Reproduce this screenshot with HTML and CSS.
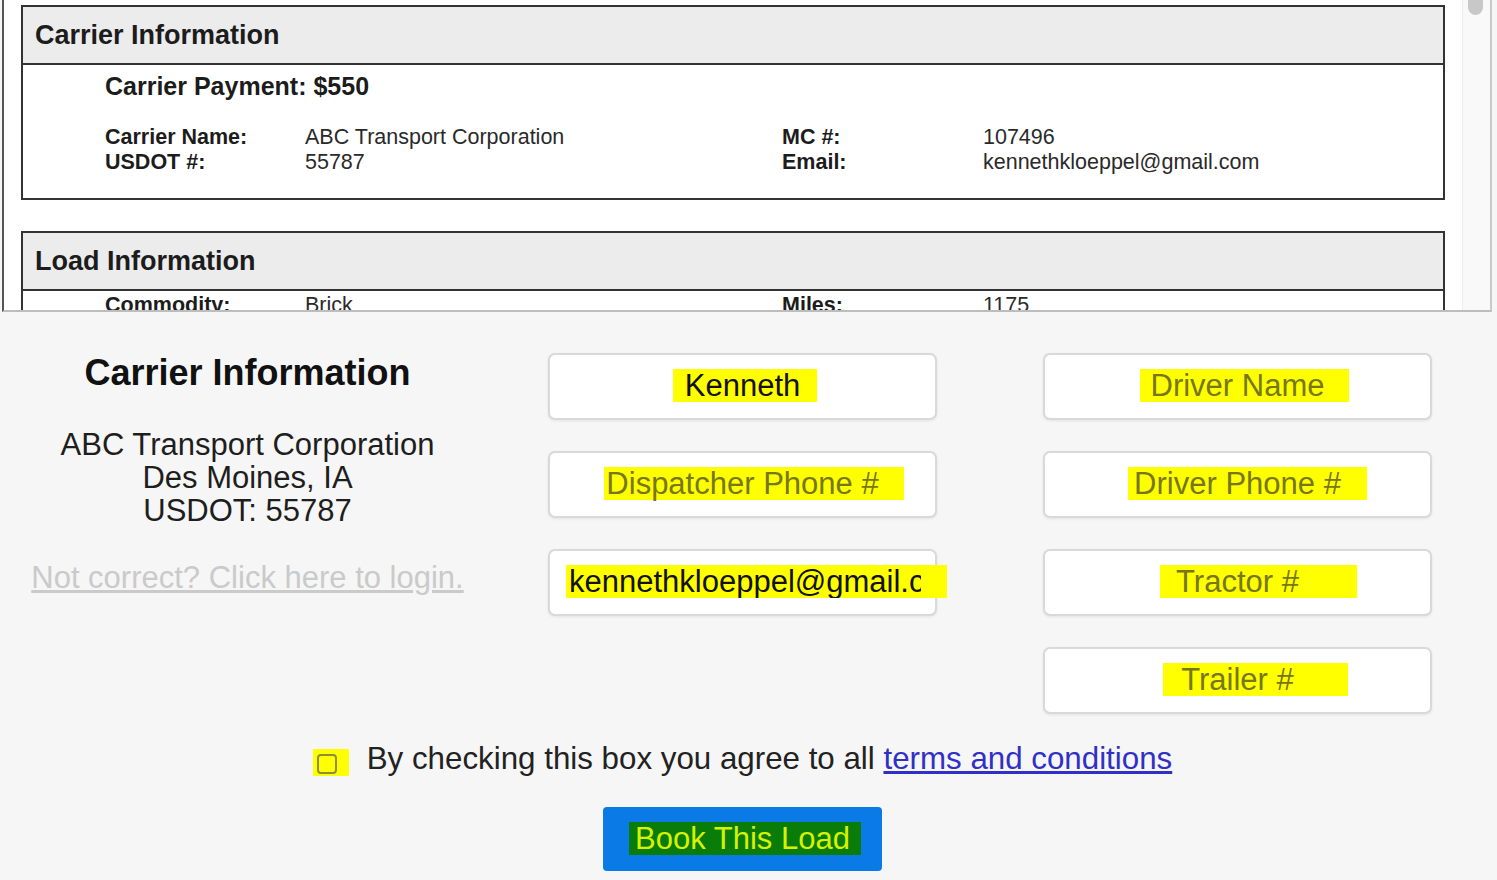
FILE: index.html
```html
<!DOCTYPE html>
<html lang="en">
<head>
    <meta charset="UTF-8">
    <meta name="viewport" content="width=device-width, initial-scale=1.0">
    <title>Book This Load</title>
    <link rel="stylesheet" href="styles.css">
</head>
<body>
    <!-- Vista previa de la carga (ventana con scroll) -->
    <div class="preview">
        <div class="preview-content">
            <div class="info-box">
                <div class="info-header">Carrier Information</div>
                <div class="info-body">
                    <div class="payment">Carrier Payment: $550</div>
                    <div class="info-grid">
                        <span class="label">Carrier Name:</span>
                        <span>ABC Transport Corporation</span>
                        <span class="label">MC #:</span>
                        <span>107496</span>
                        <span class="label">USDOT #:</span>
                        <span>55787</span>
                        <span class="label">Email:</span>
                        <span>kennethkloeppel@gmail.com</span>
                    </div>
                </div>
            </div>

            <div class="info-box">
                <div class="info-header">Load Information</div>
                <div class="info-body load-body">
                    <div class="info-grid">
                        <span class="label">Commodity:</span>
                        <span>Brick</span>
                        <span class="label">Miles:</span>
                        <span>1175</span>
                    </div>
                </div>
            </div>
        </div>
        <div class="scrollbar"><div class="thumb"></div></div>
    </div>

    <form class="booking">
        <div class="booking-grid">
            <div class="carrier-summary">
                <h2>Carrier Information</h2>
                <div class="carrier-address">
                    ABC Transport Corporation<br>
                    Des Moines, IA<br>
                    USDOT: 55787
                </div>
                <a href="#" class="login-link">Not correct? Click here to login.</a>
            </div>

            <div class="field-column">
                <div class="field"><mark class="hl hl-first-name">Kenneth</mark></div>
                <div class="field placeholder"><mark class="hl hl-dispatch">Dispatcher Phone #</mark></div>
                <div class="field"><mark class="hl hl-email"><span class="clip">kennethkloeppel@gmail.com</span></mark></div>
            </div>

            <div class="field-column">
                <div class="field placeholder"><mark class="hl hl-driver">Driver Name</mark></div>
                <div class="field placeholder"><mark class="hl hl-driver-phone">Driver Phone #</mark></div>
                <div class="field placeholder"><mark class="hl hl-tractor">Tractor #</mark></div>
                <div class="field placeholder"><mark class="hl hl-trailer">Trailer #</mark></div>
            </div>
        </div>

        <label class="terms">
            <span class="check-hl"><span class="check-box"></span></span>
            <span>By checking this box you agree to all <a href="#">terms and conditions</a></span>
        </label>

        <button type="submit" class="book-btn"><mark>Book This Load</mark></button>
    </form>
</body>
</html>
```

FILE: styles.css
```css
* {
    box-sizing: border-box;
}
body {
    margin: 0;
    background: #f6f6f6;
    font-family: "Liberation Sans", Arial, sans-serif;
    color: #1a1a1a;
}

/* Ventana de vista previa */
.preview {
    display: flex;
    width: 1490px;
    height: 312px;
    margin-left: 2px;
    background: #fff;
    border-left: 2px solid #555;
    border-right: 2px solid #c9c9c9;
    border-bottom: 2px solid #bdbdbd;
    overflow: hidden;
}
.preview-content {
    flex: 1;
    padding: 5px 17px 0 17px;
}
.scrollbar {
    width: 28px;
    background: #f9f9f9;
    border-left: 1px solid #ececec;
}
.thumb {
    width: 15px;
    height: 15px;
    margin-left: 5px;
    background: #c8c8c8;
    border-radius: 0 0 8px 8px;
}
.info-box {
    border: 2px solid #333;
    margin-bottom: 31px;
}
.info-header {
    height: 58px;
    padding-left: 12px;
    background: #ececec;
    border-bottom: 2px solid #333;
    font-size: 27px;
    font-weight: bold;
    line-height: 56px;
    color: #1c1c1c;
}
.info-body {
    padding: 6px 0 23px 82px;
    font-size: 21.5px;
    color: #2a2a2a;
}
.payment {
    font-size: 25px;
    font-weight: bold;
    line-height: 30px;
    margin-bottom: 24px;
    color: #1c1c1c;
}
.info-grid {
    display: grid;
    grid-template-columns: 200px 477px 201px 1fr;
    line-height: 25px;
}
.info-grid .label {
    font-weight: bold;
    color: #1c1c1c;
}
.load-body {
    padding-top: 2px;
}

/* Formulario de reserva */
.booking {
    width: 1485px;
    padding-top: 41px;
}
.booking-grid {
    display: grid;
    grid-template-columns: repeat(3, 1fr);
}
.carrier-summary {
    text-align: center;
}
.carrier-summary h2 {
    margin: 0;
    font-size: 36px;
    line-height: 40px;
    color: #111;
}
.carrier-address {
    margin-top: 35px;
    font-size: 31px;
    line-height: 33px;
    color: #1e1e1e;
}
.login-link {
    display: inline-block;
    margin-top: 34px;
    font-size: 31px;
    line-height: 33px;
    color: #cacaca;
}
.field-column {
    display: flex;
    flex-direction: column;
    align-items: center;
    gap: 31px;
}
.field {
    width: 389px;
    height: 67px;
    padding: 0 19px 6px;
    background: #fff;
    border: 2px solid #d9d9d9;
    border-radius: 7px;
    box-shadow: 0 1px 3px rgba(0, 0, 0, 0.08);
    font-size: 31px;
    line-height: 57px;
    text-align: center;
    white-space: nowrap;
    color: #111;
}
.field.placeholder {
    color: #76761a;
}

/* Marcas de resaltador amarillo */
.hl {
    display: inline-block;
    background: #ffff00;
    color: inherit;
    line-height: 33px;
    vertical-align: middle;
}
.hl-first-name { padding: 0 17px 0 12px; margin: 0 -17px 0 -12px; }
.hl-dispatch { padding: 0 25px 0 2px; margin: 0 -25px 0 -2px; }
.hl-driver { padding: 0 25px 0 11px; margin: 0 -25px 0 -11px; }
.hl-driver-phone { padding: 0 26px 0 6px; margin: 0 -26px 0 -6px; }
.hl-tractor { padding: 0 58px 0 16px; margin: 0 -58px 0 -16px; }
.hl-trailer { padding: 0 54px 0 18px; margin: 0 -54px 0 -18px; }
.hl-email {
    padding: 0 26px 0 3px;
    margin-left: -3px;
}
.hl-email .clip {
    display: inline-block;
    max-width: 352px;
    overflow: hidden;
    vertical-align: top;
}

.terms {
    display: flex;
    justify-content: center;
    align-items: center;
    gap: 18px;
    margin-top: 27px;
    font-size: 31.3px;
    line-height: 36px;
    color: #222;
}
.terms a {
    color: #3030c8;
}
.check-hl {
    background: #ffff00;
    padding: 5px 12px 2px 4px;
    margin-top: 7px;
}
.check-box {
    display: block;
    width: 20px;
    height: 20px;
    border: 2px solid #8d8d3a;
    border-radius: 4px;
}
.book-btn {
    display: block;
    width: 279px;
    height: 64px;
    margin: 30px auto 0;
    padding: 0;
    background: #0a7ae6;
    border: none;
    border-radius: 4px;
    font-family: inherit;
    font-size: 31px;
    color: #d7f200;
}
.book-btn mark {
    display: inline-block;
    padding: 0 11px 0 6px;
    margin: 0 -11px 0 -6px;
    line-height: 33px;
    background: #0a7c0a;
    color: inherit;
}
```
